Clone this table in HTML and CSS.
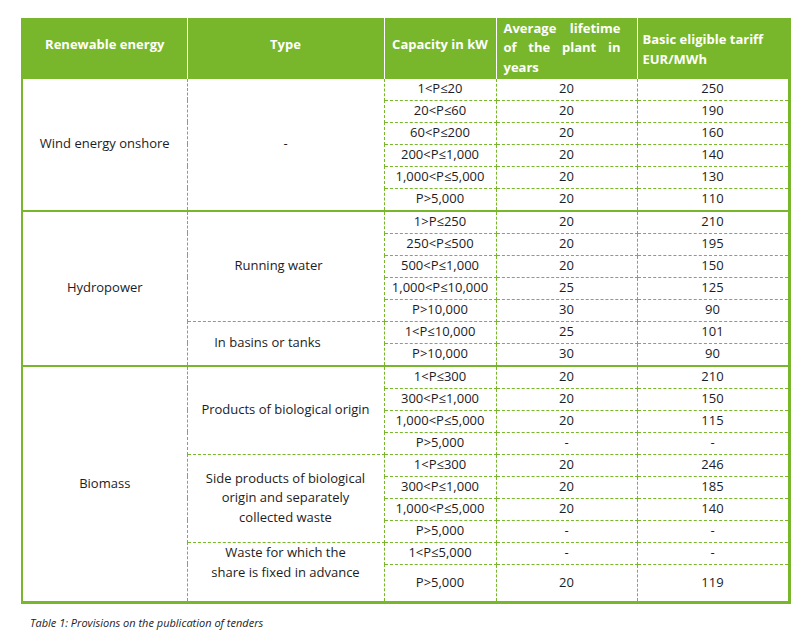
FILE: index.html
```html
<!DOCTYPE html>
<html lang="en">
<head>
<meta charset="utf-8">
<title>Provisions on the publication of tenders</title>
<link rel="stylesheet" href="styles.css">
</head>
<body>
<div class="page">
  <table class="tariffs">
    <colgroup>
      <col class="c1"><col class="c2"><col class="c3"><col class="c4"><col class="c5">
    </colgroup>
    <thead>
      <tr>
        <th class="h-one">Renewable energy</th>
        <th class="h-one">Type</th>
        <th class="h-one">Capacity in kW</th>
        <th class="h-life">Average lifetime of the plant in years</th>
        <th class="h-tariff">Basic eligible tariff EUR/MWh</th>
      </tr>
    </thead>
    <tbody class="grp first">
      <tr><td rowspan="6">Wind energy onshore</td><td rowspan="6">-</td><td>1&lt;P≤20</td><td>20</td><td>250</td></tr>
      <tr><td>20&lt;P≤60</td><td>20</td><td>190</td></tr>
      <tr><td>60&lt;P≤200</td><td>20</td><td>160</td></tr>
      <tr><td>200&lt;P≤1,000</td><td>20</td><td>140</td></tr>
      <tr><td>1,000&lt;P≤5,000</td><td>20</td><td>130</td></tr>
      <tr><td>P&gt;5,000</td><td>20</td><td>110</td></tr>
    </tbody>
    <tbody class="grp">
      <tr><td rowspan="7">Hydropower</td><td rowspan="5" class="t-run">Running water</td><td>1&gt;P≤250</td><td>20</td><td>210</td></tr>
      <tr><td>250&lt;P≤500</td><td>20</td><td>195</td></tr>
      <tr><td>500&lt;P≤1,000</td><td>20</td><td>150</td></tr>
      <tr><td>1,000&lt;P≤10,000</td><td>25</td><td>125</td></tr>
      <tr><td>P&gt;10,000</td><td>30</td><td>90</td></tr>
      <tr><td rowspan="2" class="t-basin">In basins or tanks</td><td>1&lt;P≤10,000</td><td>25</td><td>101</td></tr>
      <tr><td>P&gt;10,000</td><td>30</td><td>90</td></tr>
    </tbody>
    <tbody class="grp">
      <tr><td rowspan="10">Biomass</td><td rowspan="4" class="t-prod">Products of biological origin</td><td>1&lt;P≤300</td><td>20</td><td>210</td></tr>
      <tr><td>300&lt;P≤1,000</td><td>20</td><td>150</td></tr>
      <tr><td>1,000&lt;P≤5,000</td><td>20</td><td>115</td></tr>
      <tr><td>P&gt;5,000</td><td>-</td><td>-</td></tr>
      <tr><td rowspan="4">Side products of biological<br>origin and separately<br>collected waste</td><td>1&lt;P≤300</td><td>20</td><td>246</td></tr>
      <tr><td>300&lt;P≤1,000</td><td>20</td><td>185</td></tr>
      <tr><td>1,000&lt;P≤5,000</td><td>20</td><td>140</td></tr>
      <tr><td>P&gt;5,000</td><td>-</td><td>-</td></tr>
      <tr><td rowspan="2" class="t-waste">Waste for which the<br>share is fixed in advance</td><td>1&lt;P≤5,000</td><td>-</td><td>-</td></tr>
      <tr class="tall"><td>P&gt;5,000</td><td>20</td><td>119</td></tr>
    </tbody>
  </table>
  <p class="caption">Table 1: Provisions on the publication of tenders</p>
</div>
</body>
</html>
```

FILE: styles.css
```css
html, body {
  margin: 0;
  padding: 0;
  background: #ffffff;
}

body {
  font-family: "Open Sans", "Noto Sans", sans-serif;
  color: #1c1c24;
}

.page {
  padding: 18px 0 0 21px;
}

.tariffs {
  border-collapse: collapse;
  table-layout: fixed;
  width: 767px;
  font-size: 13px;
  line-height: 19.5px;
  border-left: 2px solid #78b72b;
  border-right: 3px solid #78b72b;
  border-bottom: 3px solid #78b72b;
}

.c1 { width: 165px; }
.c2 { width: 197px; }
.c3 { width: 112px; }
.c4 { width: 141px; }
.c5 { width: 152px; }

.tariffs th {
  box-sizing: border-box;
  background: #78b72b;
  color: #ffffff;
  font-weight: 700;
  height: 60px;
  padding: 0;
  border: 0;
  border-left: 1px solid #ffffff;
  vertical-align: middle;
}

.tariffs th.h-one {
  text-align: center;
  padding-bottom: 6px;
}

.tariffs th.h-life {
  text-align: justify;
  padding: 0 16px 0 7px;
}

.tariffs th.h-tariff {
  text-align: left;
  padding: 4px 4px 0 5px;
}

.tariffs td {
  border: 1px dashed #78b72b;
  text-align: center;
  vertical-align: middle;
  padding: 0;
  height: 21px;
}

.tariffs tr.tall td {
  height: 36px;
}

.tariffs tbody.grp > tr:first-child > td {
  border-top: 2px solid #78b72b;
}

.tariffs tbody.first > tr:first-child > td {
  border-top: 1px solid #78b72b;
}

.tariffs td.t-run {
  padding-right: 14px;
}

.tariffs td.t-basin {
  padding-right: 36px;
}

.tariffs td.t-waste {
  padding-bottom: 18px;
}

.caption {
  margin: 11px 0 0 9px;
  font-size: 11px;
  font-style: italic;
  color: #1c1c24;
}
```
